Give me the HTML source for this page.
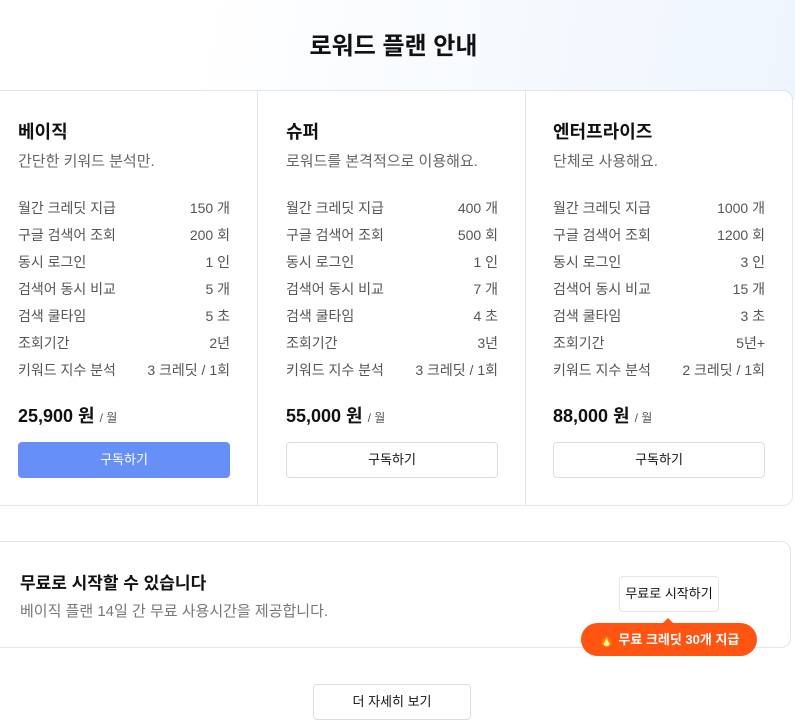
<!DOCTYPE html>
<html><head><meta charset="utf-8"><style>
*{margin:0;padding:0;box-sizing:border-box}
body{width:795px;height:722px;overflow:hidden;background:#fff;font-family:"Liberation Sans","Noto Sans CJK KR",sans-serif;color:#111;position:relative}
.hdr{position:absolute;left:0;top:0;width:795px;height:100px;background:linear-gradient(100deg,#fff 25%,#f3f8fe 75%,#eef5fd)}
h1{position:absolute;top:26px;left:-4px;width:795px;text-align:center;font-size:24px;font-weight:700;color:#111}
.cards{position:absolute;left:-10px;top:90px;width:803px;height:416px;background:#fff;border:1px solid #e3e5e8;border-radius:10px}
.col{position:absolute;top:90px;height:416px;width:268px}
.col+.col{border-left:1px solid #e3e5e8}
.in{position:absolute;left:18px;width:212px;top:0}
.t{position:absolute;top:28px;font-size:18px;font-weight:700}
.s{position:absolute;top:60px;font-size:15px;color:#666;white-space:nowrap}
.row{position:absolute;left:0;width:212px;display:flex;justify-content:space-between;font-size:14px;color:#555}
.p{position:absolute;top:312px;font-size:18px;font-weight:700;white-space:nowrap}
.p small{font-size:12px;font-weight:400;color:#555}
.b{position:absolute;top:352px;left:0;width:212px;height:36px;border:1px solid #dcdee2;border-radius:4px;text-align:center;line-height:34px;font-size:13px;background:#fff}
.b.blue{background:#6690f7;border-color:#6690f7;color:#fff}
.free{position:absolute;left:-10px;top:541px;width:801px;height:107px;border:1px solid #e3e5e8;border-radius:10px}
.ft{position:absolute;left:20px;top:569px;font-size:17px;font-weight:700}
.fs{position:absolute;left:20px;top:600px;font-size:15px;color:#777}
.fb{position:absolute;left:619px;top:576px;width:100px;height:36px;border:1px solid #e3e5e8;border-radius:4px;font-size:13px;text-align:center;line-height:34px;background:#fff}
.badge{position:absolute;left:581px;top:623px;width:176px;height:33px;background:#ff5412;border-radius:17px;color:#fff;font-size:13px;font-weight:700;text-align:center;line-height:33px}
.badge:before{content:"";position:absolute;left:82px;top:-5px;border:5px solid transparent;border-top:0;border-bottom-color:#ff5412}
.more{position:absolute;left:313px;top:684px;width:158px;height:36px;border:1px solid #dcdee2;border-radius:4px;text-align:center;line-height:34px;font-size:13px}
</style></head><body>
<div class="hdr"></div>
<h1>로워드 플랜 안내</h1>
<div class="cards"></div>
<div class="col" style="left:0;width:257px"><div class="in">
<div class="t">베이직</div><div class="s">간단한 키워드 분석만.</div>
<div class="row" style="top:108px"><span>월간 크레딧 지급</span><span>150 개</span></div>
<div class="row" style="top:135px"><span>구글 검색어 조회</span><span>200 회</span></div>
<div class="row" style="top:162px"><span>동시 로그인</span><span>1 인</span></div>
<div class="row" style="top:189px"><span>검색어 동시 비교</span><span>5 개</span></div>
<div class="row" style="top:216px"><span>검색 쿨타임</span><span>5 초</span></div>
<div class="row" style="top:243px"><span>조회기간</span><span>2년</span></div>
<div class="row" style="top:270px"><span>키워드 지수 분석</span><span>3 크레딧 / 1회</span></div>
<div class="p">25,900 원 <small>/ 월</small></div><div class="b blue">구독하기</div></div></div>
<div class="col" style="left:257px"><div class="in" style="left:28px">
<div class="t">슈퍼</div><div class="s">로워드를 본격적으로 이용해요.</div>
<div class="row" style="top:108px"><span>월간 크레딧 지급</span><span>400 개</span></div>
<div class="row" style="top:135px"><span>구글 검색어 조회</span><span>500 회</span></div>
<div class="row" style="top:162px"><span>동시 로그인</span><span>1 인</span></div>
<div class="row" style="top:189px"><span>검색어 동시 비교</span><span>7 개</span></div>
<div class="row" style="top:216px"><span>검색 쿨타임</span><span>4 초</span></div>
<div class="row" style="top:243px"><span>조회기간</span><span>3년</span></div>
<div class="row" style="top:270px"><span>키워드 지수 분석</span><span>3 크레딧 / 1회</span></div>
<div class="p">55,000 원 <small>/ 월</small></div><div class="b">구독하기</div></div></div>
<div class="col" style="left:525px"><div class="in" style="left:27px">
<div class="t">엔터프라이즈</div><div class="s">단체로 사용해요.</div>
<div class="row" style="top:108px"><span>월간 크레딧 지급</span><span>1000 개</span></div>
<div class="row" style="top:135px"><span>구글 검색어 조회</span><span>1200 회</span></div>
<div class="row" style="top:162px"><span>동시 로그인</span><span>3 인</span></div>
<div class="row" style="top:189px"><span>검색어 동시 비교</span><span>15 개</span></div>
<div class="row" style="top:216px"><span>검색 쿨타임</span><span>3 초</span></div>
<div class="row" style="top:243px"><span>조회기간</span><span>5년+</span></div>
<div class="row" style="top:270px"><span>키워드 지수 분석</span><span>2 크레딧 / 1회</span></div>
<div class="p">88,000 원 <small>/ 월</small></div><div class="b">구독하기</div></div></div>
<div class="free"></div>
<div class="ft">무료로 시작할 수 있습니다</div>
<div class="fs">베이직 플랜 14일 간 무료 사용시간을 제공합니다.</div>
<div class="fb">무료로 시작하기</div>
<div class="badge">🔥 무료 크레딧 30개 지급</div>
<div class="more">더 자세히 보기</div>
</body></html>
